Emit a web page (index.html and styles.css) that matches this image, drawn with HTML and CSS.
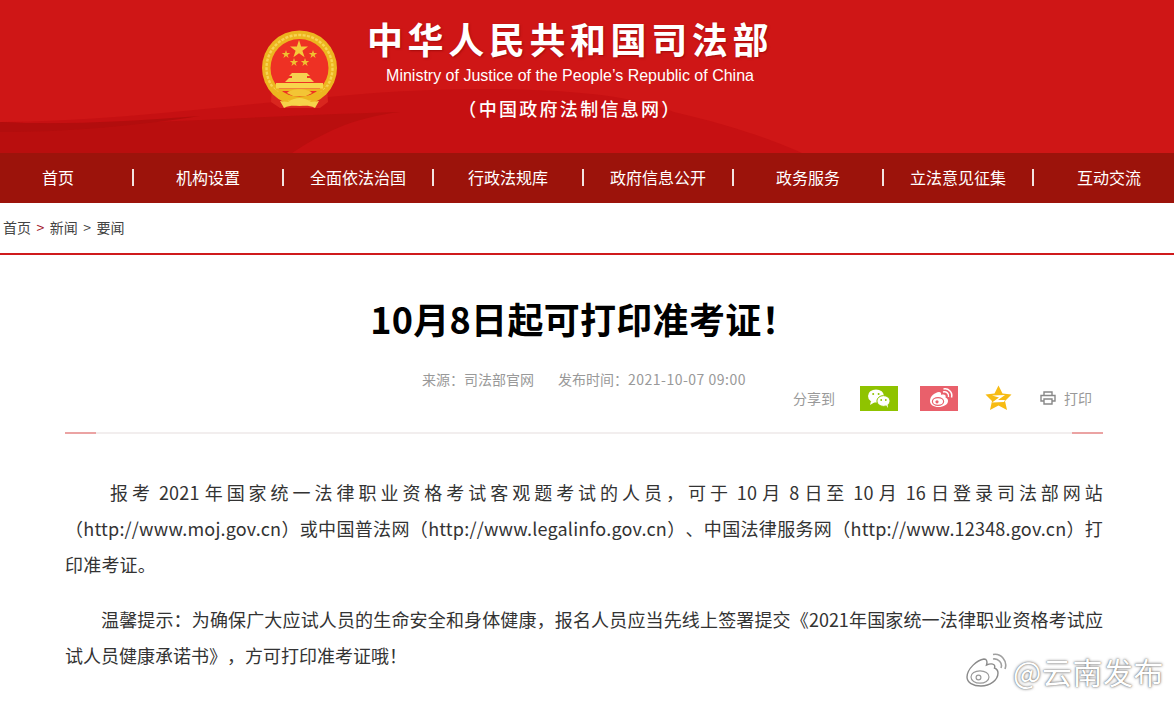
FILE: index.html
```html
<!DOCTYPE html>
<html lang="zh-CN">
<head>
    <meta charset="UTF-8">
    <title>10月8日起可打印准考证!</title>
    <link rel="stylesheet" href="styles.css">
</head>
<body>

    <!-- banner -->
    <header class="banner">
        <svg class="banner-bg" viewBox="0 0 1174 153" preserveAspectRatio="none" aria-hidden="true">
            <path d="M0 122 C110 122 220 106 350 95 C450 86 610 84 674 112 C725 124 770 138 802 153 L0 153 Z" fill="#c61012"/>
            <path d="M0 122 C120 128 240 116 400 112 C350 118 320 135 292 153 L0 153 Z" fill="#b90e0e"/>
            <path d="M0 122 C60 125 120 122 200 116 C120 128 60 132 0 132 Z" fill="#b20d0d"/>
        </svg>
        <svg class="emblem" viewBox="0 0 76 80" aria-hidden="true">
            <path d="M10 56 L9 72 L18 78 L58 78 L66 72 L65 56 Z" fill="#d9261e"/>
            <circle cx="37.5" cy="38" r="37.5" fill="#edb51f"/>
            <circle cx="37.5" cy="38" r="33" fill="none" stroke="#f7d354" stroke-width="2.4" stroke-dasharray="3 1.4"/>
            <circle cx="37.5" cy="38" r="29" fill="#ee3124"/>
            <polygon points="37,10 39.1,16.6 46,16.6 40.4,20.7 42.6,27.2 37,23.2 31.4,27.2 33.6,20.7 28,16.6 34.9,16.6" fill="#f6c93a"/>
            <polygon points="24,20 25,23 28.2,23 25.6,24.9 26.6,28 24,26.1 21.4,28 22.4,24.9 19.8,23 23,23" fill="#f0c030"/>
            <polygon points="51,20 52,23 55.2,23 52.6,24.9 53.6,28 51,26.1 48.4,28 49.4,24.9 46.8,23 50,23" fill="#f0c030"/>
            <polygon points="32,28 33,31 36.2,31 33.6,32.9 34.6,36 32,34.1 29.4,36 30.4,32.9 27.8,31 31,31" fill="#f0c030"/>
            <polygon points="43,28 44,31 47.2,31 44.6,32.9 45.6,36 43,34.1 40.4,36 41.4,32.9 38.8,31 42,31" fill="#f0c030"/>
            <path d="M30 43 L45 43 L48 46 L45 46 L45 48 L48 48 L52 52 L23 52 L27 48 L30 48 L30 46 L27 46 Z" fill="#f6d050"/>
            <rect x="14" y="53" width="47" height="5.5" fill="#f8d54c"/>
            <path d="M14 59 L61 59 L56 61 L19 61 Z" fill="#eeb322"/>
            <path d="M10 56 C18 70 57 70 65 56 L67 60 C58 75 17 75 8 60 Z" fill="#edb51f"/>
            <path d="M25 63 C29 58 46 58 50 63 L44 66 L31 66 Z" fill="#f3c535"/>
            <path d="M18 71 L26 72 C30 69 34 68 37.5 68 C41 68 45 69 49 72 L57 71 L53 78 C47 75 43 76 37.5 76 C32 76 28 75 22 78 Z" fill="#f6d34a"/>
        </svg>
        <div class="banner-text">
            <div class="banner-title">中华人民共和国司法部</div>
            <div class="banner-en">Ministry of Justice of the People’s Republic of China</div>
            <div class="banner-sub">（中国政府法制信息网）</div>
        </div>
    </header>

    <!-- main nav -->
    <nav class="main-nav">
        <a>首页</a>
        <a>机构设置</a>
        <a>全面依法治国</a>
        <a>行政法规库</a>
        <a>政府信息公开</a>
        <a>政务服务</a>
        <a>立法意见征集</a>
        <a>互动交流</a>
    </nav>

    <div class="crumbs">
        <a>首页</a>
        <span class="crumb-red">&gt;</span>
        <a>新闻</a>
        <span>&gt;</span>
        <a>要闻</a>
    </div>

    <main class="article">
        <h1>10月8日起可打印准考证！</h1>
        <div class="meta">
            <span>来源：司法部官网</span>
            <span>发布时间：<span class="meta-date">2021-10-07 09:00</span></span>
        </div>
        <div class="share">
            <span class="share-label">分享到</span>
            <a class="share-btn wechat">
                <svg viewBox="0 0 38 25" aria-hidden="true">
                    <ellipse cx="16" cy="10" rx="8" ry="6.6" fill="#fff"/>
                    <path d="M11 15 L10 19 L15 16 Z" fill="#fff"/>
                    <ellipse cx="23.5" cy="15" rx="6.6" ry="5.4" fill="#fff" stroke="#8fc300"/>
                    <path d="M26 19 L28 22 L27.5 18 Z" fill="#fff"/>
                    <circle cx="13.2" cy="8" r="1" fill="#8fc300"/>
                    <circle cx="18.6" cy="8" r="1" fill="#8fc300"/>
                    <circle cx="21.2" cy="14" r="0.9" fill="#8fc300"/>
                    <circle cx="25.8" cy="14" r="0.9" fill="#8fc300"/>
                </svg>
            </a>
            <a class="share-btn weibo">
                <svg viewBox="0 0 38 25" aria-hidden="true">
                    <path d="M10 15 C10 10 15 6.5 19 6 C21 6 21.5 7.5 21 9 C24 8 26.5 8.8 25.5 11.5 C27.5 12.2 28 13.6 28 15 C28 18.5 23.5 21 18.5 21 C13.5 21 10 18.8 10 15 Z" fill="#fff"/>
                    <ellipse cx="18" cy="15.5" rx="5.6" ry="3.8" fill="none" stroke="#e9606b" stroke-width="1.2"/>
                    <circle cx="17" cy="15.8" r="1.6" fill="#e9606b"/>
                    <path d="M23 6 C26 5 29.5 7.5 28.5 11 M23.5 3 C28.5 2 33 6.5 31.5 11.5" fill="none" stroke="#fff" stroke-width="1.5"/>
                </svg>
            </a>
            <a class="share-btn qzone">
                <svg viewBox="0 0 27 26" aria-hidden="true">
                    <polygon points="13.5,0.5 17.5,8.5 26.5,9.5 20,16 22,25 13.5,20.5 5,25 7,16 0.5,9.5 9.5,8.5" fill="#f7bb13"/>
                    <path d="M7 10.5 L20 10 L13 15 L20 15 L19 17 L7 17.5 L14 12.5 Z" fill="#fff"/>
                </svg>
            </a>
            <a class="print">
                <svg viewBox="0 0 16 14" aria-hidden="true">
                    <path d="M4 4 L4 1 L12 1 L12 4 M4 10 L1 10 L1 4.5 L15 4.5 L15 10 L12 10 M4 8 L12 8 L12 13 L4 13 Z" fill="none" stroke="#888" stroke-width="1.4"/>
                </svg>
                <span>打印</span>
            </a>
        </div>
        <div class="rule"></div>
        <div class="content">
            <p class="lead">报考 2021 年国家统一法律职业资格考试客观题考试的人员，可于 10 月 8 日至 10 月 16 日登录司法部网站（http://www.moj.gov.cn）或中国普法网（http://www.legalinfo.gov.cn）、中国法律服务网（http://www.12348.gov.cn）打印准考证。</p>
            <p class="tip">温馨提示：为确保广大应试人员的生命安全和身体健康，报名人员应当先线上签署提交《2021年国家统一法律职业资格考试应试人员健康承诺书》，方可打印准考证哦！</p>
        </div>
    </main>

    <!-- repost watermark -->
    <div class="watermark">
        <svg viewBox="0 0 44 36" aria-hidden="true">
            <path d="M2 24 C2 16 12 7 19 6 C22 6 22.5 9 21.5 12 C26 10 31 10.5 29.5 15 C32 16 33 18 33 20 C33 27 25 33 16 33 C8 33 2 29.5 2 24 Z" fill="#fff" stroke="#8a8a8a" stroke-width="1.4"/>
            <ellipse cx="15" cy="24" rx="9" ry="6.2" fill="none" stroke="#9a9a9a" stroke-width="1.2"/>
            <circle cx="13.5" cy="24.5" r="2.4" fill="none" stroke="#9a9a9a" stroke-width="1.2"/>
            <path d="M28 6 C33 5 38 10 36 15 M28 1.5 C36 0 43 8 40 16" fill="none" stroke="#a0a0a0" stroke-width="1.6"/>
        </svg>
        <span>@云南发布</span>
    </div>

</body>
</html>
```

FILE: styles.css
```css
body {
    margin: 0;
    background: #fff;
    font-family: "Noto Sans CJK SC", "Liberation Sans", sans-serif;
    color: #333;
    overflow-x: hidden;
}
a {
    color: inherit;
    text-decoration: none;
}

/* banner */
.banner {
    position: relative;
    height: 153px;
    display: flex;
    padding-left: 262px;
    background: #cf1616;
    overflow: hidden;
}
.banner-bg {
    position: absolute;
    left: 0;
    top: 0;
    width: 100%;
    height: 100%;
}
.emblem {
    position: relative;
    width: 76px;
    height: 80px;
    margin-top: 30px;
    flex-shrink: 0;
}
.banner-text {
    position: relative;
    width: 412px;
    margin-left: 26px;
    text-align: center;
    color: #fff;
}
.banner-title {
    margin-top: 13px;
    font-size: 36px;
    line-height: 50px;
    font-weight: 700;
    letter-spacing: 4.6px;
    white-space: nowrap;
    text-shadow: 1px 1px 2px rgba(120, 0, 0, 0.5);
}
.banner-en {
    font-family: "Liberation Sans", sans-serif;
    font-size: 16px;
    line-height: 20px;
    margin-top: 3px;
    white-space: nowrap;
}
.banner-sub {
    margin-top: 10px;
    font-size: 18px;
    line-height: 24px;
    font-weight: 500;
    letter-spacing: 2.3px;
    white-space: nowrap;
}

/* nav */
.main-nav {
    display: grid;
    grid-template-columns: repeat(8, 150px);
    height: 50px;
    margin-left: -16px;
    background: #9c130b;
    align-items: center;
}
.main-nav a {
    color: #fff;
    font-size: 16px;
    line-height: 17px;
    text-align: center;
    border-right: 2px solid #f3e3e0;
    white-space: nowrap;
    position: relative;
    top: -1px;
}
.main-nav a:last-child {
    border-right: none;
}

.crumbs {
    height: 48px;
    display: flex;
    align-items: center;
    gap: 5.5px;
    padding-left: 3px;
    padding-bottom: 2px;
    font-size: 14px;
    color: #444;
    border-bottom: 2px solid #cf1a1c;
}
.crumb-red {
    color: #a01020;
}

/* article */
.article {
    padding: 0 71px 0 65px;
}
h1 {
    margin: 0;
    padding-top: 38px;
    font-size: 36px;
    line-height: 50px;
    font-weight: 700;
    letter-spacing: 0.3px;
    color: #000;
    text-align: center;
}
.meta {
    margin-top: 26px;
    display: flex;
    justify-content: center;
    gap: 24px;
    font-size: 14px;
    line-height: 20px;
    color: #999;
}
.meta-date {
    letter-spacing: 0.5px;
}
.share {
    display: flex;
    align-items: center;
    justify-content: flex-end;
    height: 26px;
    margin-top: -4px;
    padding-right: 11px;
    font-size: 14px;
    color: #999;
}
.share-label {
    margin-right: 25px;
}
.share-btn {
    display: block;
    width: 38px;
    height: 25px;
    margin-right: 22px;
}
.share-btn svg {
    display: block;
    width: 100%;
    height: 100%;
}
.wechat { background: #8fc300; }
.weibo { background: #e9606b; }
.qzone {
    width: 27px;
    height: 26px;
    margin-left: 5px;
    margin-right: 28px;
}
.print {
    display: flex;
    align-items: center;
    gap: 8px;
}
.print svg {
    width: 16px;
    height: 14px;
}
.rule {
    margin-top: 21px;
    height: 2px;
    background: linear-gradient(90deg, #eba3a3 31px, #f2eeee 31px, #f2eeee calc(100% - 31px), #eba3a3 calc(100% - 31px));
}
.content {
    margin-top: 40px;
    font-size: 18px;
    line-height: 36px;
    color: #333;
    text-align: justify;
    text-spacing-trim: space-all;
}
.content p {
    margin: 0 0 19px;
}
.lead {
    text-indent: 45px;
    letter-spacing: 0.2px;
    word-spacing: -3px;
}
.tip {
    text-indent: 36px;
}

/* watermark */
.watermark {
    position: absolute;
    left: 965px;
    top: 649px;
    display: flex;
    align-items: center;
    gap: 4px;
    font-size: 30px;
    line-height: 44px;
    letter-spacing: 0.5px;
    color: #fff;
    text-shadow: 0 0 3px #666, 0 0 1px #777;
    white-space: nowrap;
}
.watermark svg {
    width: 44px;
    height: 36px;
}
```
